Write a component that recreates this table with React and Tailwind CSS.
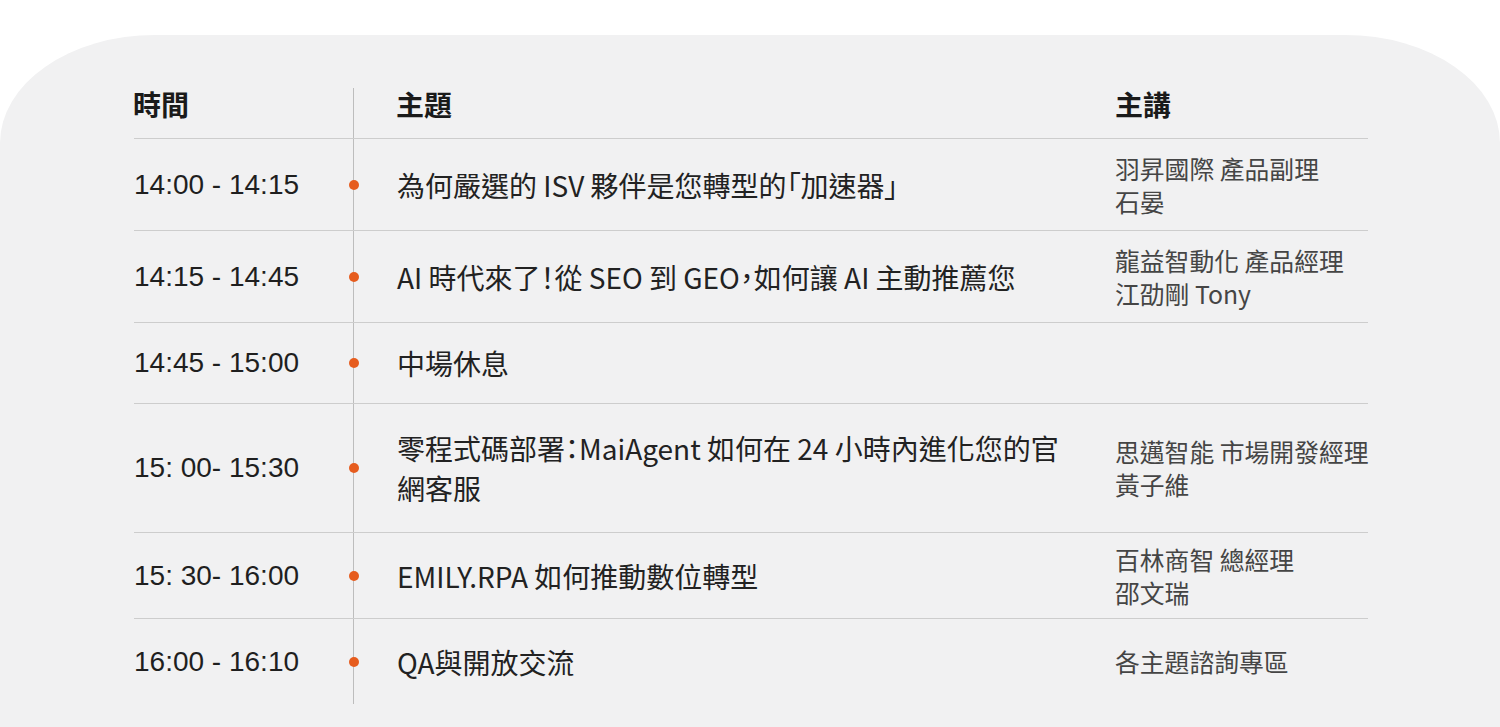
import React from "react";

const rows = [
  { time: "14:00 - 14:15", topic: ["為何嚴選的 ISV 夥伴是您轉型的「加速器」"], speaker: ["羽昇國際 產品副理", "石晏"], h: "h-[92px]", border: true },
  { time: "14:15 - 14:45", topic: ["AI 時代來了！從 SEO 到 GEO，如何讓 AI 主動推薦您"], speaker: ["龍益智動化 產品經理", "江劭剛 Tony"], h: "h-[92px]", border: true },
  { time: "14:45 - 15:00", topic: ["中場休息"], speaker: [], h: "h-[81px]", border: true },
  { time: "15: 00- 15:30", topic: ["零程式碼部署：MaiAgent 如何在 24 小時內進化您的官", "網客服"], speaker: ["思邁智能 市場開發經理", "黃子維"], h: "h-[129px]", border: true },
  { time: "15: 30- 16:00", topic: ["EMILY.RPA 如何推動數位轉型"], speaker: ["百林商智 總經理", "邵文瑞"], h: "h-[86px]", border: true },
  { time: "16:00 - 16:10", topic: ["QA與開放交流"], speaker: ["各主題諮詢專區"], h: "h-[85px]", border: false },
];

const cjk = "font-['Noto_Sans_CJK_TC','Noto_Sans_CJK_SC',sans-serif]";
const latin = "font-['Liberation_Sans','Noto_Sans_CJK_TC',sans-serif]";

export default function App() {
  return (
    <div className="min-h-screen bg-white pt-[35px]">
      <div className="bg-[#f1f1f2] rounded-tl-[155px_108px] rounded-tr-[155px_108px] pt-[53px] pb-[23px] pl-[134px]">
        <div className="w-[1234px]">
          {/* header */}
          <div className={`grid grid-cols-[219px_44px_719px_252px] h-[51px] border-b border-[#cdcdcd] text-[28px] leading-[38px] font-bold text-[#1a1a1a] ${latin}`}>
            <div className="-ml-[1px]">時間</div>
            <div className="border-l border-[#bdbdbd]" />
            <div className="-ml-[1px]">主題</div>
            <div className="-ml-[1px]">主講</div>
          </div>
          {rows.map((r, i) => (
            <div
              key={i}
              className={`grid grid-cols-[219px_44px_719px_252px] ${r.h} ${r.border ? "border-b border-[#cdcdcd]" : ""}`}
            >
              <div className={`flex items-center text-[28px] text-[#1f1f1f] ${latin}`}>{r.time}</div>
              <div className="relative border-l border-[#bdbdbd] flex items-center">
                <span className="absolute left-[-5.5px] w-[10px] h-[10px] rounded-full bg-[#e65c1e]" />
              </div>
              <div className={`flex flex-col justify-center text-[28px] leading-[40px] text-[#222] [font-feature-settings:'palt'] ${cjk}`}>
                {r.topic.map((t, j) => (
                  <div key={j} className="whitespace-nowrap">{t}</div>
                ))}
              </div>
              <div className={`flex flex-col justify-center text-[24.8px] leading-[33px] text-[#454545] ${cjk}`}>
                {r.speaker.map((s, j) => (
                  <div key={j} className="whitespace-nowrap -ml-[1px]">{s}</div>
                ))}
              </div>
            </div>
          ))}
        </div>
      </div>
    </div>
  );
}
